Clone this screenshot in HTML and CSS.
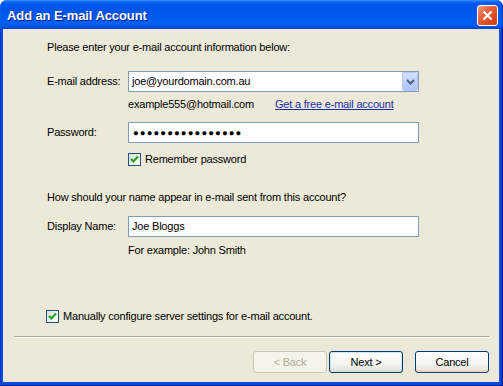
FILE: index.html
```html
<!DOCTYPE html>
<html lang="en">
  <head>
    <meta charset="UTF-8" />
    <title>Add an E-mail Account</title>
    <link rel="stylesheet" href="styles.css">
  </head>
  <body>
    <div class="window">
      <div class="titlebar">
        <span class="title">Add an E-mail Account</span>
        <button type="button" class="close-btn" aria-label="Close">
          <svg width="11" height="11" viewBox="0 0 11 11"><path d="M1.5 1.5 L9.5 9.5 M9.5 1.5 L1.5 9.5" stroke="#fff" stroke-width="2.2" fill="none"/></svg>
        </button>
      </div>

      <div class="frame">
        <div class="client">
          <div class="content">
            <p class="intro">Please enter your e-mail account information below:</p>

            <div class="field-row row-email">
              <span class="label">E-mail address:</span>
              <div class="textbox combo">
                <span class="value">joe@yourdomain.com.au</span>
                <span class="drop">
                  <svg width="9" height="6" viewBox="0 0 9 6"><path d="M1 1 L4.5 4.5 L8 1" stroke="#4d6185" stroke-width="2" fill="none"/></svg>
                </span>
              </div>
            </div>

            <div class="hint-row row-example">
              <span class="hint-text">example555@hotmail.com</span>
              <a href="#" class="link">Get a free e-mail account</a>
            </div>

            <div class="field-row row-password">
              <span class="label">Password:</span>
              <div class="textbox"><span class="dots">●●●●●●●●●●●●●●●●</span></div>
            </div>

            <div class="check-row row-remember">
              <span class="checkbox">
                <svg width="11" height="11" viewBox="0 0 11 11"><path d="M2 5 L4.3 7.5 L9 2.5" stroke="#21a121" stroke-width="2.2" fill="none"/></svg>
              </span>
              <span>Remember password</span>
            </div>

            <p class="question">How should your name appear in e-mail sent from this account?</p>

            <div class="field-row row-display">
              <span class="label">Display Name:</span>
              <div class="textbox"><span class="value">Joe Bloggs</span></div>
            </div>

            <div class="hint-row row-for-example">
              <span>For example: John Smith</span>
            </div>

            <div class="check-row row-manual">
              <span class="checkbox">
                <svg width="11" height="11" viewBox="0 0 11 11"><path d="M2 5 L4.3 7.5 L9 2.5" stroke="#21a121" stroke-width="2.2" fill="none"/></svg>
              </span>
              <span>Manually configure server settings for e-mail account.</span>
            </div>
          </div>

          <div class="separator"></div>

          <div class="button-bar">
            <button type="button" class="btn" disabled>&lt; Back</button>
            <button type="button" class="btn btn-default">Next &gt;</button>
            <button type="button" class="btn btn-cancel">Cancel</button>
          </div>
        </div>
      </div>
    </div>
  </body>
</html>
```

FILE: styles.css
```css
* {
  box-sizing: border-box;
}

html,
body {
  margin: 0;
  background: #ffffff;
}

body {
  font-family: "Liberation Sans", Arial, sans-serif;
  font-size: 11px;
  line-height: 13px;
  letter-spacing: -0.2px;
  color: #000000;
}

p {
  margin: 0;
}

.window {
  width: 503px;
  height: 386px;
  display: flex;
  flex-direction: column;
}

/* title bar */
.titlebar {
  height: 29px;
  flex-shrink: 0;
  display: flex;
  align-items: center;
  justify-content: space-between;
  padding: 0 5px 0 7px;
  border-radius: 7px 7px 0 0;
  background: linear-gradient(to bottom, #3d8fff 0, #0a64f2 2px, #0055ea 5px, #0057ed 45%, #0060f6 80%, #0058ec 90%, #0040cb 100%);
  box-shadow: inset 1px 0 #0a5ee6, inset -1px 0 #0035c8;
}

.title {
  font-family: "Liberation Sans", Arial, sans-serif;
  font-weight: bold;
  font-size: 13px;
  letter-spacing: -0.1px;
  color: #ffffff;
  text-shadow: 1px 1px #0a1a8a;
  margin-top: 2px;
}

.close-btn {
  width: 21px;
  height: 21px;
  padding: 0;
  margin-top: 2px;
  display: flex;
  align-items: center;
  justify-content: center;
  border: 1px solid #ffffff;
  border-radius: 3px;
  background: linear-gradient(135deg, #f4a184 0%, #e5653f 35%, #d94a22 70%, #c8401c 100%);
  cursor: pointer;
}

/* window frame */
.frame {
  flex: 1;
  display: flex;
  padding: 0 4px 4px 3px;
  background: #0a4ee0;
  box-shadow: inset 1px 0 #0831d9, inset -1px 0 #001ea0, inset 0 -1px #001ea0, inset -2px 0 #0637c8;
}

.client {
  flex: 1;
  display: flex;
  flex-direction: column;
  background: #ece9d8;
}

.content {
  padding-left: 44px;
}

.intro {
  margin-top: 12px;
}

.field-row {
  display: grid;
  grid-template-columns: 81px 291px;
  align-items: center;
  height: 21px;
}

.textbox {
  height: 21px;
  display: flex;
  align-items: center;
  background: #ffffff;
  border: 1px solid #7f9db9;
  padding-left: 3px;
}

.combo {
  justify-content: space-between;
}

.drop {
  width: 16px;
  height: 19px;
  display: flex;
  align-items: center;
  justify-content: center;
  border: 1px solid #b5c8f6;
  border-radius: 2px;
  background: linear-gradient(to bottom, #d4e0fd 0%, #bfd1fb 50%, #afc4f6 100%);
}

.dots {
  font-family: "Liberation Sans", Arial, sans-serif;
  font-size: 9.5px;
  letter-spacing: 1.1px;
  padding-left: 1px;
}

.hint-row {
  display: flex;
  padding-left: 81px;
}

.hint-text {
  width: 147px;
}

.link {
  color: #1a2fa8;
  text-decoration: underline;
}

.check-row {
  display: flex;
  align-items: center;
  gap: 4px;
  height: 13px;
}

.checkbox {
  width: 13px;
  height: 13px;
  display: flex;
  align-items: center;
  justify-content: center;
  border: 1px solid #1c5180;
  background: linear-gradient(135deg, #dcdcd7 0%, #f3f3ef 60%, #ffffff 100%);
}

.row-email {
  margin-top: 17px;
}

.row-example {
  margin-top: 6px;
}

.row-password {
  margin-top: 11px;
}

.row-remember {
  margin-top: 10px;
  padding-left: 81px;
}

.question {
  margin-top: 25px;
}

.row-display {
  margin-top: 12px;
}

.row-for-example {
  margin-top: 7px;
}

.row-manual {
  margin-top: 53px;
  margin-left: -1px;
}

.separator {
  margin: 13px 10px 0 11px;
  border-top: 1px solid #aca899;
  border-bottom: 1px solid #ffffff;
}

/* buttons */
.button-bar {
  display: flex;
  justify-content: flex-end;
  gap: 2px;
  padding-right: 10px;
  margin-top: 13px;
}

.btn {
  width: 74px;
  height: 22px;
  padding: 0;
  font-family: "Liberation Sans", Arial, sans-serif;
  font-size: 11px;
  letter-spacing: -0.2px;
  color: #000000;
  border: 1px solid #003c74;
  border-radius: 3px;
  background: linear-gradient(to bottom, #ffffff 0%, #f4f4f0 60%, #e8e6dc 88%, #d6d0c5 100%);
  cursor: pointer;
}

.btn:disabled {
  color: #aca899;
  border-color: #c9c7ba;
  background: #f5f4ea;
  cursor: default;
}

.btn-default {
  box-shadow: inset 0 0 0 1px #cee7ff;
}

.btn-cancel {
  margin-left: 10px;
}
```
